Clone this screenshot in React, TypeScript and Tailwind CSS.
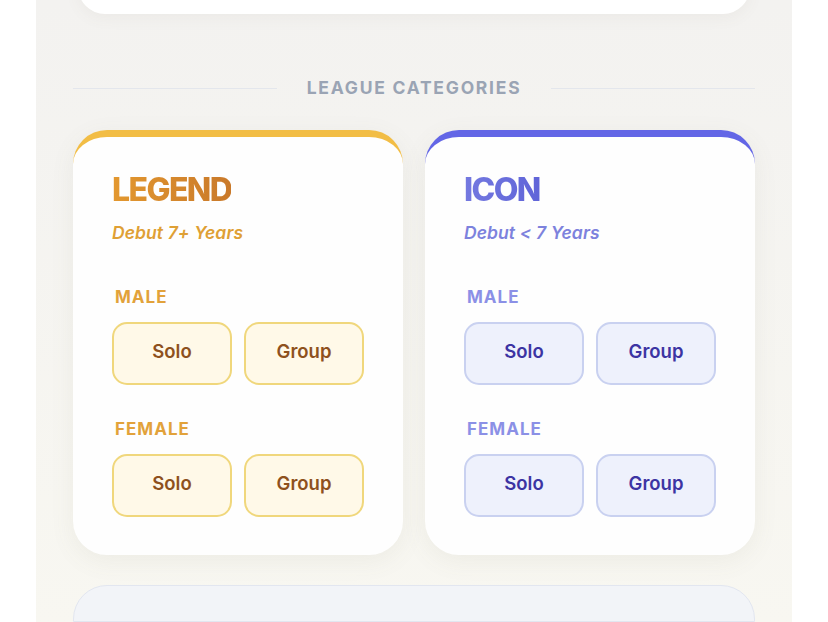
import React from "react";

// League category card data
interface Category {
  title: string;
  subtitle: string;
  accent: string;
  titleClass: string;
  subtitleClass: string;
  labelClass: string;
  buttonClass: string;
}

const categories: Category[] = [
  {
    title: "LEGEND",
    subtitle: "Debut 7+ Years",
    accent: "border-t-[#f2bd45]",
    titleClass: "bg-gradient-to-r from-[#e3982f] to-[#c9792a]",
    subtitleClass: "text-[#dfa035]",
    labelClass: "text-[#e2a23a]",
    buttonClass: "bg-[#fff9e8] border-[#f0d77c] text-[#8e511d]",
  },
  {
    title: "ICON",
    subtitle: "Debut < 7 Years",
    accent: "border-t-[#6366e6]",
    titleClass: "bg-gradient-to-r from-[#7479e0] to-[#6064d8]",
    subtitleClass: "text-[#7d82dd]",
    labelClass: "text-[#8b90e6]",
    buttonClass: "bg-[#eef1fc] border-[#c9d1f0] text-[#3c34a3]",
  },
];

function GroupRow({ label, cat }: { label: string; cat: Category }) {
  return (
    <div className="flex flex-col">
      <div
        className={`text-[17px] font-bold tracking-[0.06em] leading-[20px] pl-[3px] ${cat.labelClass}`}
      >
        {label}
      </div>
      <div className="flex gap-[12px] mt-[15px]">
        {["Solo", "Group"].map((t) => (
          <button
            key={t}
            className={`w-[120px] h-[63px] rounded-[15px] border-2 text-[18.5px] font-semibold pb-[3px] ${cat.buttonClass}`}
          >
            {t}
          </button>
        ))}
      </div>
    </div>
  );
}

function CategoryCard({ cat }: { cat: Category }) {
  return (
    <div
      className={`flex-1 h-[425px] bg-[#fefefe] rounded-[34px] border-t-[7px] ${cat.accent} shadow-[0_6px_24px_rgba(120,110,90,0.08)] pl-[39px] pt-[33px]`}
    >
      <h2
        className={`text-[32px] leading-[40px] font-extrabold tracking-[-0.05em] bg-clip-text text-transparent w-fit ${cat.titleClass}`}
      >
        {cat.title}
      </h2>
      <p
        className={`mt-[12px] text-[17.5px] italic font-semibold leading-[22px] tracking-[0.005em] ${cat.subtitleClass}`}
      >
        {cat.subtitle}
      </p>
      <div className="mt-[43px] flex flex-col gap-[34px]">
        <GroupRow label="MALE" cat={cat} />
        <GroupRow label="FEMALE" cat={cat} />
      </div>
    </div>
  );
}

export default function App() {
  return (
    <div
      className="w-full h-[622px] overflow-hidden bg-white flex justify-center"
      style={{ fontFamily: "Inter, 'Noto Sans', sans-serif" }}
    >
      <div className="w-[756px] h-full bg-gradient-to-b from-[#f3f2f0] to-[#f8f7f1] px-[37px] flex flex-col">
        {/* previous section card, scrolled mostly off screen */}
        <div className="mx-[5px] -mt-[40px] h-[54px] bg-white rounded-[30px] shadow-[0_4px_16px_rgba(120,110,90,0.06)]" />

        {/* section divider */}
        <div className="mt-[64px] flex items-center gap-[30px]">
          <div className="flex-1 h-px bg-[#e3e6ec]" />
          <span className="text-[17.5px] font-bold tracking-[0.1em] text-[#9aa4b4] leading-[20px]">
            LEAGUE CATEGORIES
          </span>
          <div className="flex-1 h-px bg-[#e3e6ec]" />
        </div>

        <div className="mt-[32px] flex gap-[22px]">
          {categories.map((c) => (
            <CategoryCard key={c.title} cat={c} />
          ))}
        </div>

        {/* next section, peeking in */}
        <div className="mt-[30px] flex-1 bg-[#f2f4f8] border border-[#e2e6f0] rounded-t-[34px]" />
      </div>
    </div>
  );
}
